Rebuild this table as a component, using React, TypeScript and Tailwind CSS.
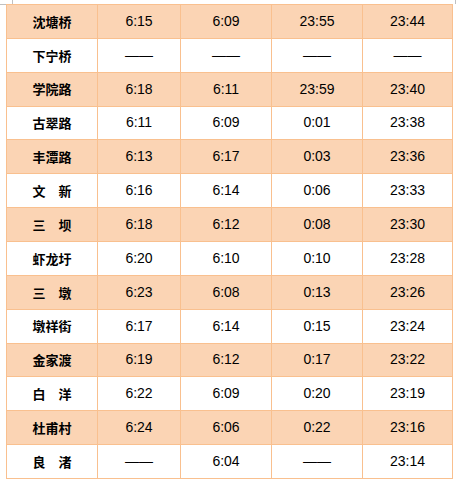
const rows: [string, string, string, string, string][] = [
  ["沈塘桥", "6:15", "6:09", "23:55", "23:44"],
  ["下宁桥", "——", "——", "——", "——"],
  ["学院路", "6:18", "6:11", "23:59", "23:40"],
  ["古翠路", "6:11", "6:09", "0:01", "23:38"],
  ["丰潭路", "6:13", "6:17", "0:03", "23:36"],
  ["文\u3000新", "6:16", "6:14", "0:06", "23:33"],
  ["三\u3000坝", "6:18", "6:12", "0:08", "23:30"],
  ["虾龙圩", "6:20", "6:10", "0:10", "23:28"],
  ["三\u3000墩", "6:23", "6:08", "0:13", "23:26"],
  ["墩祥街", "6:17", "6:14", "0:15", "23:24"],
  ["金家渡", "6:19", "6:12", "0:17", "23:22"],
  ["白\u3000洋", "6:22", "6:09", "0:20", "23:19"],
  ["杜甫村", "6:24", "6:06", "0:22", "23:16"],
  ["良\u3000渚", "——", "6:04", "——", "23:14"],
];

export default function App() {
  return (
    <div className="relative w-[457px] h-[485px] bg-white overflow-hidden">
      {/* 角のトンボ */}
      <div className="absolute left-[12px] top-0 w-px h-[4px] bg-[#c0c0c0]" />
      <div className="absolute left-0 top-[4px] w-[6px] h-px bg-[#c0c0c0]" />
      <div className="absolute left-[455px] top-0 w-px h-[4px] bg-[#c0c0c0]" />

      <div className="pl-[6px] pt-[4px]">
        <div className="grid grid-cols-[91px_83px_91px_91px_90px] grid-rows-[repeat(14,minmax(0,1fr))] h-[475px] w-[447px] border-l border-t border-[#f9c08f]">
          {rows.map((row, i) =>
            row.map((cell, j) => (
              <div
                key={i + "-" + j}
                className={
                  "flex items-center justify-center border-r border-b border-[#f9c08f] text-black " +
                  (i % 2 === 0 ? "bg-[#fbd4b4] " : "bg-white ") +
                  (j === 0
                    ? "font-['Noto_Sans_CJK_SC',sans-serif] font-bold text-[13px]"
                    : "font-['Liberation_Sans',sans-serif] text-[14px]")
                }
              >
                {cell}
              </div>
            ))
          )}
        </div>
      </div>
    </div>
  );
}
